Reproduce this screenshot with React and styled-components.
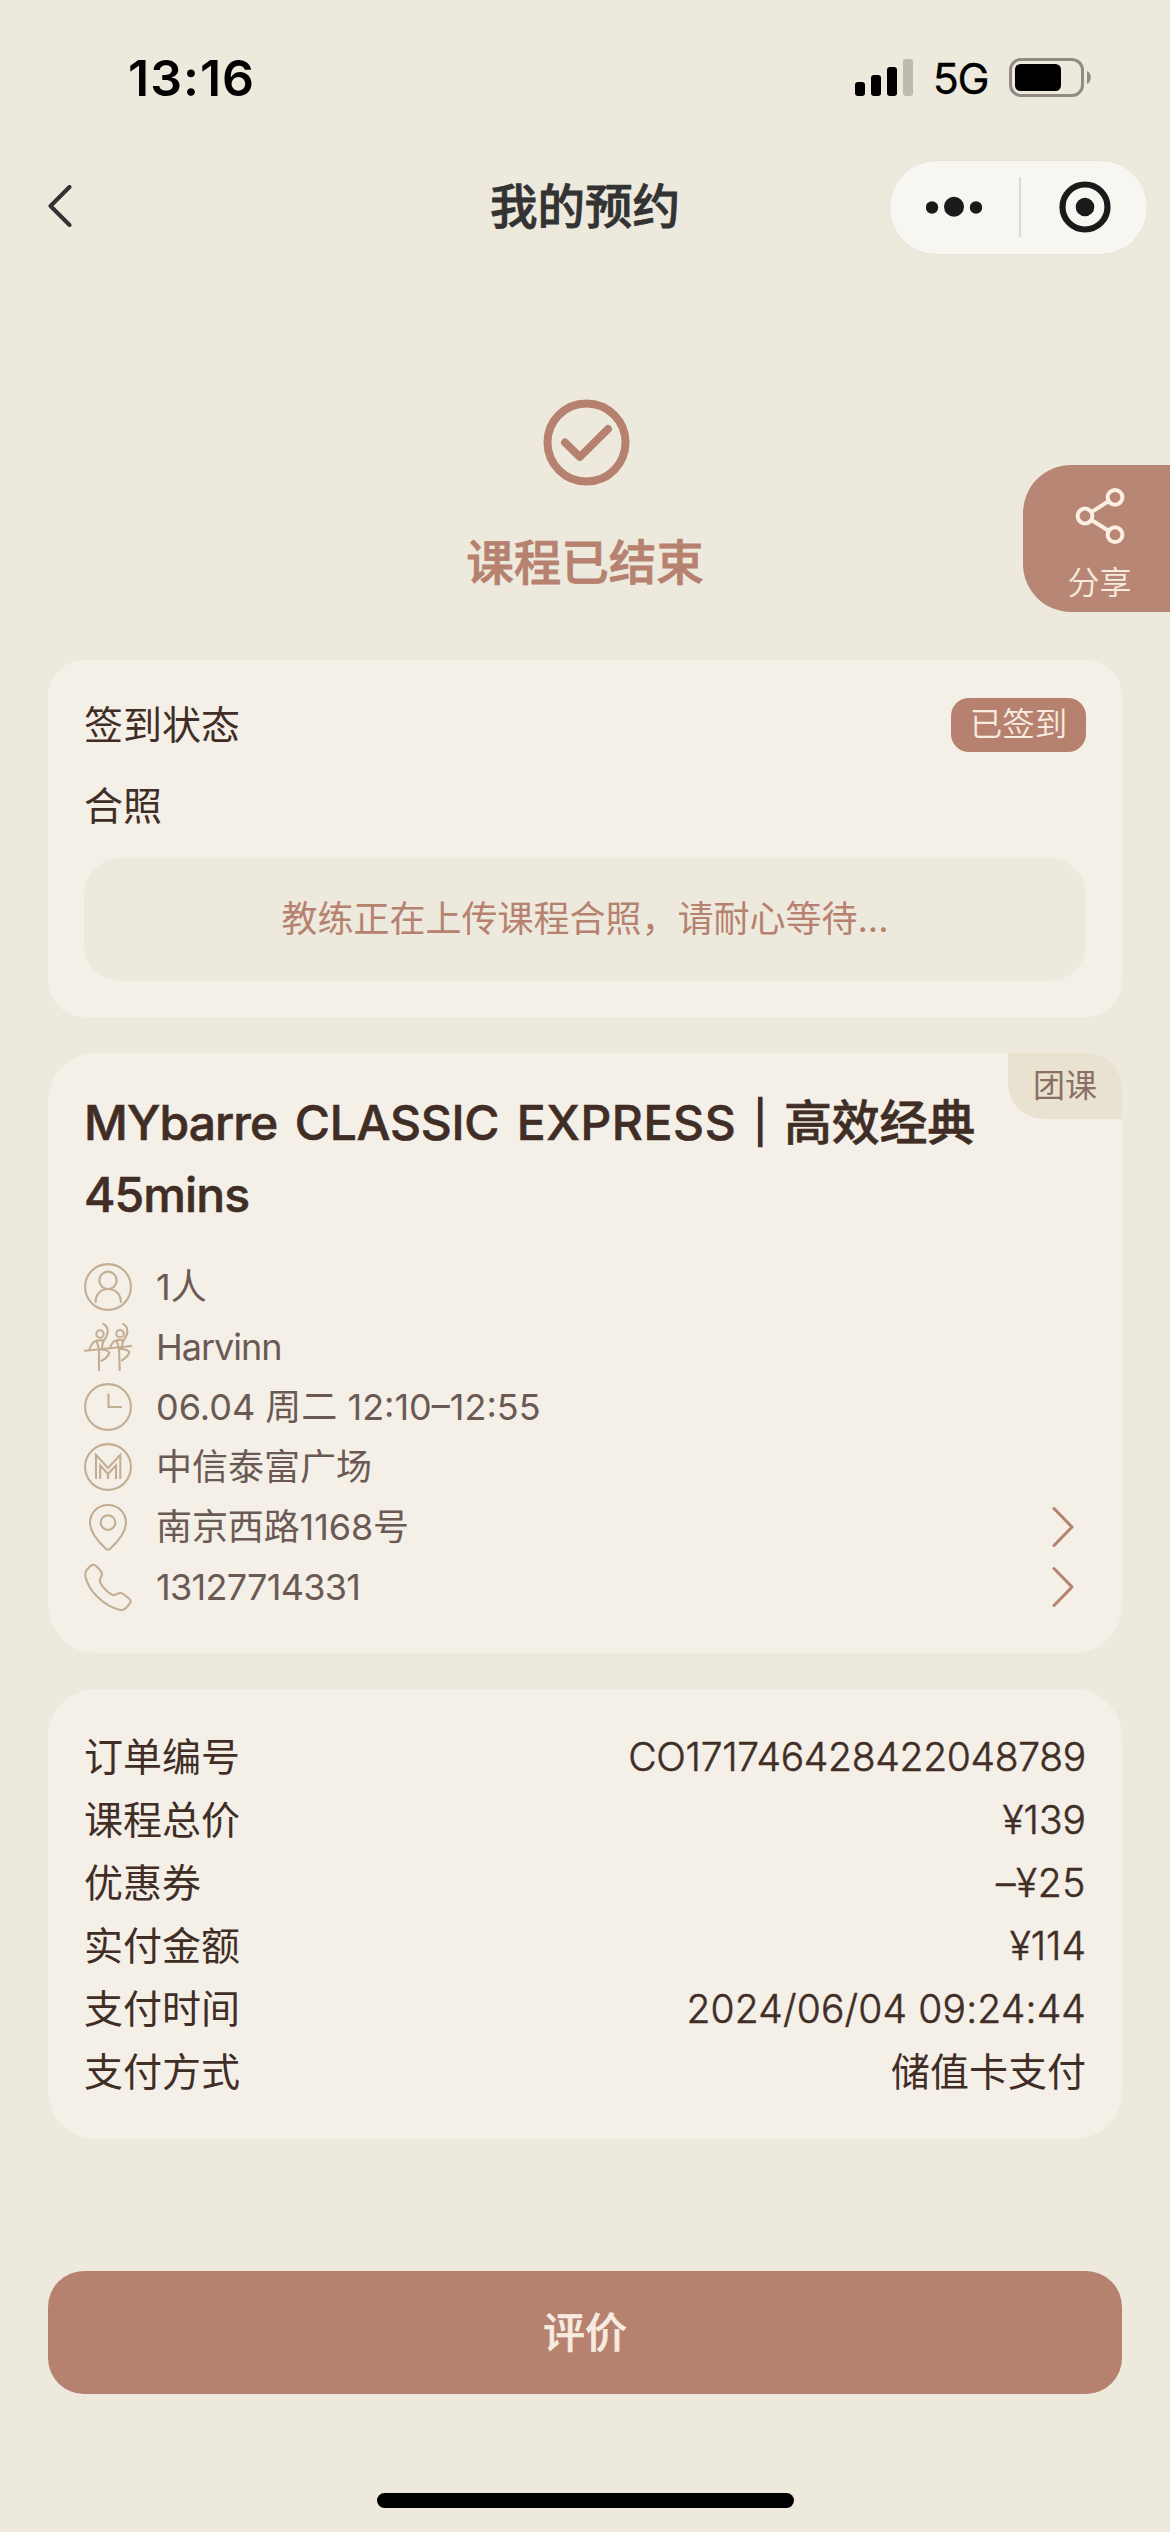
import React from 'react'
import styled, { createGlobalStyle } from 'styled-components'

const colors = {
  bg: '#ede9dd',
  card: '#f4efe7',
  accent: '#b6826f',
  text: '#402e26',
  sub: '#6b5a53',
  line: '#c3ae93',
}

const GlobalStyle = createGlobalStyle`
  * {
    box-sizing: border-box;
  }
  body {
    margin: 0;
    background: ${colors.bg};
    color: ${colors.text};
    font-family: Inter, 'Noto Sans CJK SC', sans-serif;
  }
`

const Page = styled.div`
  position: relative;
  display: flex;
  flex-direction: column;
  width: 1170px;
  height: 2532px;
  overflow: hidden;
`

const StatusBar = styled.header`
  display: flex;
  align-items: center;
  justify-content: space-between;
  height: 155px;
  padding: 0 78px 0 128px;
  color: #000;
`

const Clock = styled.div`
  font-size: 50px;
  font-weight: 600;
  letter-spacing: 1px;
`

const StatusIcons = styled.div`
  display: flex;
  align-items: center;
`

const Network = styled.span`
  margin: 0 21px 0 20px;
  font-size: 43px;
  font-weight: 400;
  line-height: 48px;
  letter-spacing: -1.5px;
  -webkit-text-stroke: 0.3px #000;
`

const NavBar = styled.nav`
  display: grid;
  grid-template-columns: 281px 1fr 259px;
  align-items: center;
  height: 104px;
  padding-right: 22px;
`

const BackButton = styled.button`
  display: flex;
  justify-self: start;
  margin-left: 46px;
  padding: 0;
  border: none;
  background: none;
`

const NavTitle = styled.h1`
  margin: 0;
  font-size: 47.5px;
  font-weight: 500;
  line-height: 60px;
  text-align: center;
  color: #333;
  -webkit-text-stroke: 0.8px #333;
`

const Capsule = styled.div`
  display: flex;
  align-items: center;
  justify-content: space-between;
  height: 95px;
  padding: 0 36px;
  border: 1px solid #e6e3d9;
  border-radius: 48px;
  background: #f7f6f1;
`

const CapsuleDivider = styled.span`
  width: 2px;
  height: 60px;
  margin-left: -1px;
  background: #dcdad5;
`

const Hero = styled.section`
  display: flex;
  flex-direction: column;
  align-items: center;
  height: 401px;
  padding-top: 140px;

  svg {
    margin-left: 3px;
  }
`

const HeroText = styled.div`
  margin-top: 42px;
  font-size: 47.5px;
  font-weight: 500;
  line-height: 70px;
  color: ${colors.accent};
  -webkit-text-stroke: 0.8px ${colors.accent};
`

const ShareButton = styled.button`
  position: absolute;
  top: 465px;
  right: 0;
  display: flex;
  flex-direction: column;
  align-items: center;
  gap: 18px;
  width: 147px;
  height: 147px;
  padding: 22px 0 0 6px;
  border: none;
  border-radius: 48px 0 0 48px;
  background: #b88674;
  color: #f7ebdd;
  font-family: inherit;
  font-size: 32px;
  font-weight: 350;
  line-height: 40px;
`

const Main = styled.main`
  display: flex;
  flex-direction: column;
  gap: 36px;
  padding: 0 48px;
`

const Card = styled.section`
  position: relative;
  padding: 36px;
  border-radius: ${({ $radius }) => $radius || 48}px;
  background: ${colors.card};
`

const StatusRow = styled.div`
  display: flex;
  align-items: center;
  justify-content: space-between;
  height: ${({ $height }) => $height}px;
  font-size: 39px;
  line-height: 56px;
`

const Badge = styled.span`
  width: 135px;
  border-radius: 18px;
  background: ${colors.accent};
  color: #f7ebe0;
  font-size: 32.5px;
  font-weight: 350;
  line-height: 54px;
  text-align: center;
`

const PhotoNotice = styled.div`
  height: 123px;
  border-radius: 36px;
  background: ${colors.bg};
  color: ${colors.accent};
  font-size: 36px;
  line-height: 123px;
  text-align: center;
`

const CourseTag = styled.span`
  position: absolute;
  top: 0;
  right: 0;
  width: 114px;
  height: 66px;
  border-radius: 0 36px 0 36px;
  background: #e9e2d0;
  color: #8a7064;
  font-size: 32px;
  line-height: 66px;
  text-align: center;
`

const CourseTitle = styled.h2`
  margin: -2px 0 26px;
  font-size: 48px;
  font-weight: 500;
  line-height: 72px;
  letter-spacing: -0.3px;
  word-spacing: 5px;
  -webkit-text-stroke: 0.6px ${colors.text};
`

const Word = styled.span`
  letter-spacing: ${({ $spacing }) => $spacing}px;
`

const TitleBar = styled.span`
  -webkit-text-stroke: 2.4px ${colors.text};
`

const InfoRow = styled.div`
  display: flex;
  align-items: center;
  gap: 24px;
  height: 60px;
  padding-right: 12px;
  font-size: 36px;
  line-height: 60px;
  color: ${colors.sub};
`

const InfoText = styled.span`
  flex: 1;
  letter-spacing: ${({ $spacing }) => $spacing || 0}px;
`

const OrderRow = styled.div`
  display: flex;
  justify-content: space-between;
  font-size: 39px;
  line-height: 63px;
`

const OrderValue = styled.span`
  font-weight: ${({ $cjk }) => ($cjk ? 400 : 350)};
  letter-spacing: ${({ $spacing }) => $spacing || 0}px;
  -webkit-text-stroke: ${({ $cjk }) => ($cjk ? 0 : 0.5)}px ${colors.text};
`

const ReviewButton = styled.button`
  height: 123px;
  margin: 132px 48px 0;
  padding: 0;
  border: none;
  border-radius: 36px;
  background: ${colors.accent};
  color: #f7ebe0;
  font-family: inherit;
  font-size: 42px;
  font-weight: 500;
  line-height: 123px;
  -webkit-text-stroke: 0.5px #f7ebe0;
`

const HomeIndicator = styled.div`
  align-self: center;
  width: 417px;
  height: 15px;
  margin-top: 99px;
  border-radius: 8px;
  background: #000;
`

const SignalIcon = () => (
  <svg width="58" height="38" viewBox="0 0 58 38">
    <rect x="0" y="23" width="10" height="14" rx="3" />
    <rect x="16" y="16" width="10" height="21" rx="3" />
    <rect x="32" y="8" width="10" height="29" rx="3" />
    <rect x="48" y="0" width="10" height="37" rx="3" opacity="0.2" />
  </svg>
)

const BatteryIcon = () => (
  <svg width="83" height="39" viewBox="0 0 83 39">
    <rect x="1.5" y="1.5" width="72" height="36" rx="10.5" fill="none" stroke="#908c83" strokeWidth="3" />
    <rect x="6" y="6" width="46" height="27" rx="5.5" />
    <path d="M78 13c5 2 5 11 0 13z" fill="#908c83" />
  </svg>
)

const BackIcon = () => (
  <svg width="28" height="44" viewBox="0 0 28 44" fill="none" stroke="#333" strokeWidth="4" strokeLinecap="round" strokeLinejoin="round">
    <path d="M23.5 2L4.5 21l19 19" />
  </svg>
)

const MoreIcon = () => (
  <svg width="56" height="22" viewBox="0 0 56 22" fill="#1a1a1a">
    <circle cx="6" cy="11.5" r="6.2" />
    <circle cx="28" cy="10.8" r="10" />
    <circle cx="50" cy="11.5" r="6.2" />
  </svg>
)

const TargetIcon = () => (
  <svg width="52" height="52" viewBox="0 0 52 52">
    <circle cx="26" cy="26" r="22.5" fill="none" stroke="#1a1a1a" strokeWidth="6.2" />
    <circle cx="26" cy="26" r="9.3" fill="#1a1a1a" />
  </svg>
)

const DoneIcon = () => (
  <svg width="87" height="87" viewBox="0 0 87 87" fill="none" stroke={colors.accent} strokeWidth="8" strokeLinecap="round" strokeLinejoin="round">
    <circle cx="43.5" cy="43.5" r="39" />
    <path d="M22 43.5L36.8 58 65 30" />
  </svg>
)

const ShareIcon = () => (
  <svg width="50" height="58" viewBox="0 0 50 58" fill="none" stroke="#fbeee2" strokeWidth="4">
    <circle cx="10" cy="29" r="7.4" />
    <circle cx="40" cy="10.3" r="7.4" />
    <circle cx="40" cy="47.7" r="7.4" />
    <path d="M16.5 25l17-10.7M16.5 33l17 10.7" />
  </svg>
)

const ArrowIcon = () => (
  <svg width="24" height="42" viewBox="0 0 24 42" fill="none" stroke={colors.accent} strokeWidth="3" strokeLinecap="round" strokeLinejoin="round">
    <path d="M4 2.5L22 21 4 39.5" />
  </svg>
)

const LineIcon = ({ children }) => (
  <svg width="48" height="48" viewBox="0 0 48 48" fill="none" stroke={colors.line} strokeWidth="2.1" strokeLinecap="round" strokeLinejoin="round">
    {children}
  </svg>
)

const PersonIcon = () => (
  <LineIcon>
    <circle cx="24" cy="24" r="22.9" />
    <circle cx="24" cy="17.3" r="8.7" />
    <path d="M11.6 39C11.6 31 17 26 24 26s12.9 5 12.9 13" />
  </LineIcon>
)

const DancersIcon = () => (
  <LineIcon>
    <path d="M1 27.8l46.4-4.8" />
    <circle cx="16" cy="11" r="3.7" />
    <path d="M19.3 1c6 3 5.5 10.5.6 16.3-1.2 2.3-1.8 4.7-1.9 7.7M5.3 27c1.5-5.5 4.2-9.3 8.7-9.8l5.5.2M12.5 18l2.5 8v21.500M15.5 26.5c4.500-.2 8.500.7 9.800 3.300-1.300 3.700-4.200 6.200-7.600 8" />
    <circle cx="36" cy="10.7" r="3.7" />
    <path d="M39 .9c6 3 5.5 10.5.6 16.3-1.2 2.3-1.6 4.500-1.700 7.100M26 25c1.5-5.2 4.2-7.8 8-8l5.5.2M32.5 18l2.500 7 .7 22.200M35.500 26c4.500-.2 8.500.7 9.800 3.300-1.300 3.700-4.200 6.200-7.300 8" />
  </LineIcon>
)

const ClockIcon = () => (
  <LineIcon>
    <circle cx="24" cy="24" r="22.9" />
    <path d="M24.5 10.5V24H38" strokeLinecap="butt" strokeLinejoin="miter" />
  </LineIcon>
)

const StudioIcon = () => (
  <LineIcon>
    <circle cx="24" cy="24" r="22.9" />
    <path d="M12 36V12l12 13 12.3-13v24M16.2 36V22.5L24 31l8-8.5V36M24 31v5" strokeLinecap="butt" strokeLinejoin="miter" />
  </LineIcon>
)

const PinIcon = () => (
  <LineIcon>
    <path d="M24 2C13.5 2 6 10 6 19.7c0 9.8 8.5 19.3 15.8 26 1.4 1.3 3 1.3 4.4 0C33.5 39 42 29.5 42 19.7 42 10 34.5 2 24 2z" />
    <circle cx="24" cy="19.7" r="7.3" />
  </LineIcon>
)

const PhoneIcon = () => (
  <LineIcon>
    <path d="M6.5 3C8.5 1.3 10.5 1.5 12.500 3.300l3.700 3.900c2 2.300 2.300 4.500 1 6.700-1.700 2.600-1.800 4.500-.5 6.600 2.500 4.300 6.500 8.500 11.100 11 1.700.8 3.200.7 4.900-.3 2.800-1.800 5.100-1.700 7.300.3l5.200 4.300c1.800 1.600 1.900 3.300.4 5l-3.800 4.500c-1.800 1.800-4 2-6.500 1.400C20.500 43.500 5.500 29 1.600 14.500.7 10.500 1.200 8.500 3 6.500z" />
  </LineIcon>
)

const courseInfo = [
  { icon: <PersonIcon />, text: '1人' },
  { icon: <DancersIcon />, text: 'Harvinn', spacing: -1 },
  { icon: <ClockIcon />, text: '06.04 周二 12:10–12:55' },
  { icon: <StudioIcon />, text: '中信泰富广场' },
  { icon: <PinIcon />, text: '南京西路1168号', spacing: -0.1, link: true },
  { icon: <PhoneIcon />, text: '13127714331', spacing: -0.7, link: true },
]

const orderInfo = [
  { label: '订单编号', value: 'CO171746428422048789', spacing: -0.3 },
  { label: '课程总价', value: '¥139' },
  { label: '优惠券', value: '–¥25', spacing: 0.6 },
  { label: '实付金额', value: '¥114' },
  { label: '支付时间', value: '2024/06/04 09:24:44', spacing: 0.15 },
  { label: '支付方式', value: '储值卡支付', cjk: true },
]

export default function App() {
  return (
    <>
      <GlobalStyle />
      <Page>
        <StatusBar>
          <Clock>13:16</Clock>
          <StatusIcons>
            <SignalIcon />
            <Network>5G</Network>
            <BatteryIcon />
          </StatusIcons>
        </StatusBar>

        <NavBar>
          <BackButton><BackIcon /></BackButton>
          <NavTitle>我的预约</NavTitle>
          <Capsule>
            <MoreIcon />
            <CapsuleDivider />
            <TargetIcon />
          </Capsule>
        </NavBar>

        <Hero>
          <DoneIcon />
          <HeroText>课程已结束</HeroText>
        </Hero>
        <ShareButton>
          <ShareIcon />
          分享
        </ShareButton>

        <Main>
          <Card $radius={36}>
            <StatusRow $height={58}>
              签到状态
              <Badge>已签到</Badge>
            </StatusRow>
            <StatusRow $height={104}>合照</StatusRow>
            <PhotoNotice>教练正在上传课程合照，请耐心等待...</PhotoNotice>
          </Card>

          <Card>
            <CourseTag>团课</CourseTag>
            <CourseTitle>
              <Word $spacing={-0.9}>MYbarre</Word> CLASSIC <Word $spacing={0.6}>EXPRESS</Word>
              <TitleBar>｜</TitleBar>高效经典
              <br />
              <Word $spacing={-0.9}>45mins</Word>
            </CourseTitle>
            {courseInfo.map(({ icon, text, link, spacing }) => (
              <InfoRow key={text}>
                {icon}
                <InfoText $spacing={spacing}>{text}</InfoText>
                {link && <ArrowIcon />}
              </InfoRow>
            ))}
          </Card>

          <Card>
            {orderInfo.map(({ label, value, spacing, cjk }) => (
              <OrderRow key={label}>
                <span>{label}</span>
                <OrderValue $spacing={spacing} $cjk={cjk}>{value}</OrderValue>
              </OrderRow>
            ))}
          </Card>
        </Main>

        <ReviewButton>评价</ReviewButton>
        <HomeIndicator />
      </Page>
    </>
  )
}
